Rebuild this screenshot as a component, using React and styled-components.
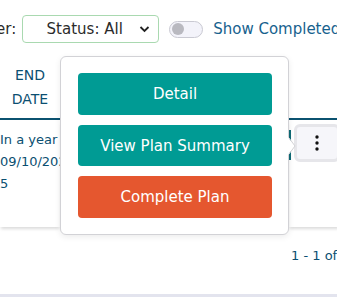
import styled, { createGlobalStyle } from 'styled-components'

const Global = createGlobalStyle`
    body {
        margin: 0;
        background: #fff;
        font-family: "DejaVu Sans", "Open Sans", sans-serif;
    }
`

const Page = styled.div`
    position: relative;
    width: 337px;
    height: 297px;
    overflow: hidden;
    background: #fff;
`

const Toolbar = styled.div`
    display: flex;
    align-items: center;
    height: 28px;
    padding-top: 15px;
    white-space: nowrap;
`

const Label = styled.span`
    font-size: 15px;
    color: #2b2b2b;
    margin-left: -4px;
    margin-right: 6px;
`

const Select = styled.div`
    flex: none;
    width: 137px;
    height: 28px;
    box-sizing: border-box;
    border: 1px solid #a9d9b0;
    border-radius: 4px;
    display: flex;
    align-items: center;
    justify-content: center;
    padding-right: 12px;
    position: relative;
    font-size: 15px;
    color: #2b2b2b;

    svg {
        position: absolute;
        right: 8px;
        top: 9px;
    }
`

const Toggle = styled.div`
    flex: none;
    width: 34px;
    height: 17px;
    box-sizing: border-box;
    margin-left: 10px;
    border: 1px solid #c9c9d2;
    border-radius: 9px;
    background: #f3f3fa;
    display: flex;
    align-items: center;
    padding-left: 2px;

    &::before {
        content: '';
        width: 12px;
        height: 12px;
        border-radius: 50%;
        background: #b9b9c0;
    }
`

const ToggleText = styled.span`
    margin-left: 10px;
    font-size: 15px;
    color: #17628e;
`

const Grid = styled.div`
    display: grid;
    grid-template-columns: 60px 229px 1fr;
`

const Table = styled(Grid)`
    margin-top: 13px;
`

const HeadCell = styled.div`
    height: 62px;
    border-bottom: 2px solid #0b5270;
    display: flex;
    align-items: center;
    justify-content: center;
    text-align: center;
    font-size: 14px;
    line-height: 24px;
    color: #0b4f71;
    text-transform: uppercase;
`

const BodyCell = styled.div`
    height: 107px;
    box-shadow: 0 3px 3px -1px rgba(0, 0, 0, 0.14);
    font-size: 13px;
    line-height: 22px;
    color: #0b4f71;
    padding-top: 9px;
    box-sizing: border-box;
    white-space: nowrap;
    overflow: hidden;
`

const ActionCell = styled(BodyCell)`
    overflow: visible;
    display: flex;
    padding-top: 4px;
`

const RowMark = styled.div`
    width: 2px;
    height: 30px;
    margin-top: 6px;
    background: #0f6b76;
`

const Kebab = styled.div`
    margin-left: 3px;
    width: 46px;
    height: 38px;
    box-sizing: border-box;
    border: 3px solid #e6e6ea;
    border-radius: 6px;
    background: #f6f6fa;
    display: flex;
    align-items: center;
    padding-left: 18px;
`

const Footer = styled(Grid)`
    padding-top: 21px;
    font-size: 13px;
    color: #0b4f71;
    white-space: nowrap;
`

const Pager = styled.div`
    grid-column: 3;
    padding-left: 2px;
`

const BottomStrip = styled.div`
    position: absolute;
    left: 0;
    right: 0;
    bottom: 0;
    height: 3px;
    background: #e3e4ee;
`

const Popover = styled.div`
    position: absolute;
    left: 60px;
    top: 56px;
    width: 229px;
    height: 179px;
    box-sizing: border-box;
    padding: 16px 17px;
    background: #fff;
    border: 1px solid #d2d2d6;
    border-radius: 6px;
    box-shadow: 0 2px 6px rgba(0, 0, 0, 0.08);
    display: flex;
    flex-direction: column;
    gap: 10px;

    svg.arrow {
        position: absolute;
        right: -9px;
        top: 80px;
    }
`

const MenuButton = styled.button`
    height: 42px;
    width: 194px;
    border: none;
    border-radius: 4px;
    background: ${p => (p.danger ? '#e5572f' : '#009b94')};
    color: #fff;
    font-family: inherit;
    font-size: 15px;
    cursor: pointer;
`

export default function App() {
    return (
        <Page>
            <Global />
            <Toolbar>
                <Label>er:</Label>
                <Select>
                    Status: All
                    <svg width="11" height="8" viewBox="0 0 11 8">
                        <path d="M1.5 2 L5.5 6 L9.5 2" fill="none" stroke="#222" strokeWidth="1.8" />
                    </svg>
                </Select>
                <Toggle />
                <ToggleText>Show Completed</ToggleText>
            </Toolbar>

            <Table>
                <HeadCell>End<br />Date</HeadCell>
                <HeadCell />
                <HeadCell />

                <BodyCell>In a year<br />09/10/2025<br />5</BodyCell>
                <BodyCell />
                <ActionCell>
                    <RowMark />
                    <Kebab>
                        <svg width="4" height="16" viewBox="0 0 4 16">
                            <circle cx="2" cy="2" r="1.7" fill="#111" />
                            <circle cx="2" cy="8" r="1.7" fill="#111" />
                            <circle cx="2" cy="14" r="1.7" fill="#111" />
                        </svg>
                    </Kebab>
                </ActionCell>
            </Table>

            <Footer>
                <Pager>1 - 1 of 1 items</Pager>
            </Footer>
            <BottomStrip />

            <Popover>
                <MenuButton>Detail</MenuButton>
                <MenuButton>View Plan Summary</MenuButton>
                <MenuButton danger>Complete Plan</MenuButton>
                <svg className="arrow" width="9" height="18" viewBox="0 0 9 18">
                    <path d="M0 0 L7 9 L0 18 Z" fill="#fff" />
                    <path d="M1 1 L7 9 L1 17" fill="none" stroke="#d2d2d6" strokeWidth="1" />
                </svg>
            </Popover>
        </Page>
    )
}
